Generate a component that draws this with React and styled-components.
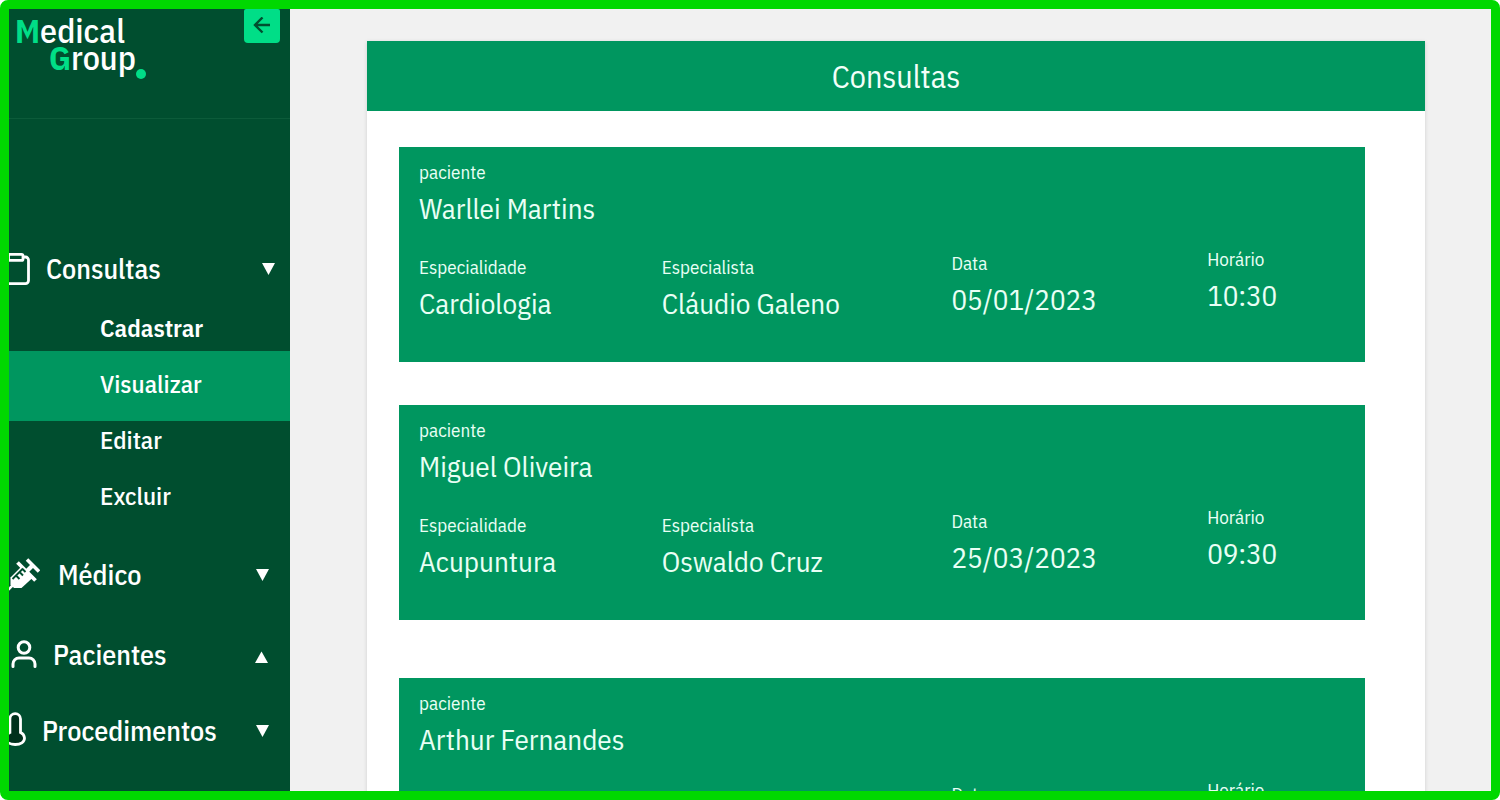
import React from "react";
import styled, { createGlobalStyle } from "styled-components";

const GlobalStyle = createGlobalStyle`
  *, *::before, *::after { box-sizing: border-box; }
  body { margin: 0; background: #ffffff; }
  body, button {
    font-family: "IBM Plex Sans Condensed", "Roboto Condensed", Roboto, sans-serif;
  }
  h1, h2, p, ul, dl, dt, dd { margin: 0; padding: 0; font-weight: 400; }
  ul { list-style: none; }
`;

const Frame = styled.div`
  display: flex;
  height: 100vh;
  border: 9px solid #00d800;
  border-radius: 8px;
  background: #f1f1f1;
  overflow: hidden;
`;

const Sidebar = styled.aside`
  flex: none;
  width: 281px;
  overflow: hidden;
  background: #004e2f;
  color: #ffffff;
`;

const Brand = styled.header`
  display: flex;
  justify-content: space-between;
  align-items: flex-start;
  height: 110px;
  padding: 0 10px 0 6px;
  border-bottom: 1px solid #0c5b3a;
`;

const Logo = styled.a`
  display: flex;
  flex-direction: column;
  padding-top: 8px;
  color: #ffffff;
  font-size: 34px;
  line-height: 27px;
  font-weight: 500;
  text-decoration: none;
`;

const LogoLine = styled.span`
  display: flex;
  align-items: flex-end;
  padding-left: ${(p) => (p.$indent ? "34px" : "0")};
`;

const Initial = styled.strong`
  color: #00de87;
  font-weight: 700;
`;

const Dot = styled.span`
  width: 10px;
  height: 10px;
  margin-bottom: -8px;
  border-radius: 50%;
  background: #00de87;
`;

const CollapseButton = styled.button`
  display: grid;
  place-items: center;
  width: 36px;
  height: 34px;
  padding: 0;
  border: 0;
  border-radius: 2px 2px 4px 4px;
  background: #00de87;
  color: #004e2f;
  cursor: pointer;
`;

const Nav = styled.nav`
  display: flex;
  flex-direction: column;
  padding-top: 119px;
`;

const Group = styled.div`
  padding-bottom: ${(p) => (p.$open ? "9px" : "0")};
`;

const GroupButton = styled.button`
  display: flex;
  align-items: center;
  width: 100%;
  height: ${(p) => p.$height}px;
  padding: 0 ${(p) => (p.$open ? "15px" : "21px")} 0 0;
  border: 0;
  background: none;
  color: inherit;
  font-size: 28px;
  line-height: 36px;
  font-weight: 500;
  text-align: left;
  cursor: pointer;
`;

const GroupIcon = styled.span`
  flex: none;
  display: flex;
  justify-content: flex-end;
  width: ${(p) => p.$width}px;
  margin-right: ${(p) => p.$gap}px;

  svg { flex: none; }
`;

const GroupLabel = styled.span`
  flex: 1;
`;

const SubItem = styled.li`
  height: ${(p) => (p.$active ? "70px" : "56px")};
  margin: ${(p) => (p.$active ? "-5px 0 -9px" : "0")};
  padding: ${(p) => (p.$active ? "5px 0 9px" : "0")};
  background: ${(p) => (p.$active ? "#00965f" : "transparent")};
`;

const SubLink = styled.a`
  display: block;
  padding-left: 91px;
  color: #ffffff;
  font-size: 25px;
  line-height: 56px;
  font-weight: ${(p) => (p.$strong ? 600 : 500)};
  text-decoration: none;
`;

const Main = styled.main`
  flex: 1;
  min-width: 0;
  overflow: hidden;
  padding: 32px 66px 0 77px;
`;

const Panel = styled.section`
  background: #ffffff;
  box-shadow: 0 1px 4px rgba(0, 0, 0, 0.14);
`;

const PanelTitle = styled.h1`
  height: 70px;
  background: #00965f;
  color: #f2fff9;
  font-size: 32px;
  line-height: 70px;
  text-align: center;
`;

const CardList = styled.ul`
  padding: 36px 60px 60px 32px;
`;

const Card = styled.li`
  height: 215px;
  margin-bottom: ${(p) => p.$gap}px;
  padding: 13px 0 0 20px;
  background: #00965f;
  color: #e9fff5;
`;

const Details = styled.dl`
  display: grid;
  grid-template-columns: 243fr 290fr 256fr 158fr;
  padding-top: 19px;
`;

const Field = styled.div`
  padding-top: ${(p) => p.$drop}px;
`;

const Label = styled.dt`
  font-size: 19px;
  line-height: 24px;
`;

const Value = styled.dd`
  padding-top: 4px;
  font-size: 29px;
  line-height: 40px;
`;

const ArrowLeft = () => (
  <svg width="18" height="18" viewBox="0 0 18 18" fill="none" stroke="currentColor" strokeWidth="2.4">
    <path d="M17 8H2M9.500 0.500L2 8l7.500 7.500" />
  </svg>
);

const Clipboard = () => (
  <svg width="30" height="32" viewBox="0 0 30 32" fill="none" stroke="#fff" strokeWidth="2.800" strokeLinejoin="round">
    <path d="M7 4H4.500a3 3 0 0 0-3 3v20.600a3 3 0 0 0 3 3H25.500a3 3 0 0 0 3-3V7a3 3 0 0 0-3-3H23" />
    <rect x="8.500" y="1.400" width="14.500" height="6" rx="1.500" />
  </svg>
);

const Syringe = () => (
  <svg width="32" height="34" viewBox="0 0 32 34" fill="none">
    <path d="M0 32l5-5" stroke="#fff" strokeWidth="2.500" />
    <path d="M2.500 26.500V19.500L14 8l11.500 11L13.500 30H6z" fill="#fff" />
    <path d="M9.500 4.500l18 18" stroke="#fff" strokeWidth="3.800" />
    <path d="M19 1.500l12 12" stroke="#fff" strokeWidth="3.600" />
    <path d="M19 13l6-6" stroke="#fff" strokeWidth="4.200" />
    <path d="M4.500 21L15 10.500M8 17.500l3.500 3.500M11.500 14l3.500 3.500M14.500 11l3 3" stroke="#004e2f" strokeWidth="1.900" />
  </svg>
);

const Person = () => (
  <svg width="26" height="30" viewBox="0 0 26 30" fill="none" stroke="#fff" strokeWidth="3" strokeLinecap="round">
    <circle cx="13" cy="7.500" r="5.800" />
    <path d="M2 26.500v-2.500a6 6 0 0 1 6-6h10a6 6 0 0 1 6 6v2.500" />
  </svg>
);

const Thermometer = () => (
  <svg width="22" height="38" viewBox="0 0 22 38" fill="#00301c" stroke="#fff" strokeWidth="2.800">
    <path d="M16.500 20.500V7a5.300 5.300 0 0 0-10.600 0v13.500a6.600 6.600 0 0 0-4 5.500c0 4 4 6.500 9.300 6.500s9.300-2.500 9.300-6.500a6.600 6.600 0 0 0-4-5.500z" />
  </svg>
);

const Caret = ({ up }) => (
  <svg width="14" height="16" viewBox="0 0 14 16" fill="#fff">
    <path d={up ? "M0 16L6.500 4.500 13 16z" : "M1 2h13L7.500 14z"} />
  </svg>
);

const menu = [
  {
    label: "Consultas", icon: <Clipboard />, width: 21, gap: 16, height: 62, open: true,
    items: [
      { label: "Cadastrar", strong: true },
      { label: "Visualizar", active: true },
      { label: "Editar" },
      { label: "Excluir" },
    ],
  },
  { label: "Médico", icon: <Syringe />, width: 31, gap: 18, height: 84 },
  { label: "Pacientes", icon: <Person />, width: 28, gap: 16, height: 76, up: true },
  { label: "Procedimentos", icon: <Thermometer />, width: 17, gap: 16, height: 76 },
];

const appointments = [
  { patient: "Warllei Martins", specialty: "Cardiologia", doctor: "Cláudio Galeno", date: "05/01/2023", time: "10:30", gap: 43 },
  { patient: "Miguel Oliveira", specialty: "Acupuntura", doctor: "Oswaldo Cruz", date: "25/03/2023", time: "09:30", gap: 58 },
  { patient: "Arthur Fernandes", specialty: "Cardiologia", doctor: "Cláudio Galeno", date: "12/04/2023", time: "11:00", gap: 0 },
];

const columns = [
  { key: "specialty", label: "Especialidade", drop: 8 },
  { key: "doctor", label: "Especialista", drop: 8 },
  { key: "date", label: "Data", drop: 4 },
  { key: "time", label: "Horário", drop: 0 },
];

export default function App() {
  return (
    <>
      <GlobalStyle />
      <Frame>
        <Sidebar>
          <Brand>
            <Logo href="#">
              <LogoLine><span><Initial>M</Initial>edical</span></LogoLine>
              <LogoLine $indent><span><Initial>G</Initial>roup</span><Dot /></LogoLine>
            </Logo>
            <CollapseButton type="button" aria-label="Recolher menu"><ArrowLeft /></CollapseButton>
          </Brand>
          <Nav>
            {menu.map((group) => (
              <Group key={group.label} $open={group.open}>
                <GroupButton type="button" $open={group.open} $height={group.height}>
                  <GroupIcon $width={group.width} $gap={group.gap}>{group.icon}</GroupIcon>
                  <GroupLabel>{group.label}</GroupLabel>
                  <Caret up={group.up} />
                </GroupButton>
                {group.items && (
                  <ul>
                    {group.items.map((item) => (
                      <SubItem key={item.label} $active={item.active}>
                        <SubLink href="#" $strong={item.strong}>{item.label}</SubLink>
                      </SubItem>
                    ))}
                  </ul>
                )}
              </Group>
            ))}
          </Nav>
        </Sidebar>
        <Main>
          <Panel>
            <PanelTitle>Consultas</PanelTitle>
            <CardList>
              {appointments.map((item) => (
                <Card key={item.patient} $gap={item.gap}>
                  <dl>
                    <Label>paciente</Label>
                    <Value>{item.patient}</Value>
                  </dl>
                  <Details>
                    {columns.map((column) => (
                      <Field key={column.key} $drop={column.drop}>
                        <Label>{column.label}</Label>
                        <Value>{item[column.key]}</Value>
                      </Field>
                    ))}
                  </Details>
                </Card>
              ))}
            </CardList>
          </Panel>
        </Main>
      </Frame>
    </>
  );
}
